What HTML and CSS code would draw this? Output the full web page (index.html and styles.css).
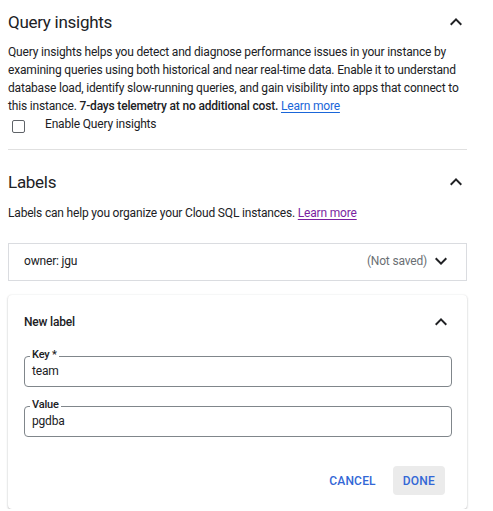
FILE: index.html
```html
<!DOCTYPE html>
<html lang="en">
<head>
<meta charset="utf-8">
<title>Query insights and labels</title>
<link rel="stylesheet" href="styles.css">
</head>
<body>
<div class="panel">
  <div class="section-header first">
    <h2 class="section-title">Query insights</h2>
    <svg class="icon" viewBox="0 0 24 24" width="24" height="24"><path d="M12 8l-6 6 1.41 1.41L12 10.83l4.59 4.58L18 14z"/></svg>
  </div>
  <p class="desc">Query insights helps you detect and diagnose performance issues in your instance by examining queries using both historical and near real-time data. Enable it to understand database load, identify slow-running queries, and gain visibility into apps that connect to this instance. <strong>7-days telemetry at no additional cost.</strong> <a class="link" href="#">Learn more</a></p>
  <label class="check-row"><span class="checkbox"></span><span class="check-text">Enable Query insights</span></label>
  <div class="divider"></div>

  <div class="section-header labels">
    <h2 class="section-title">Labels</h2>
    <svg class="icon" viewBox="0 0 24 24" width="24" height="24"><path d="M12 8l-6 6 1.41 1.41L12 10.83l4.59 4.58L18 14z"/></svg>
  </div>
  <p class="desc single">Labels can help you organize your Cloud SQL instances. <a class="link visited" href="#">Learn more</a></p>

  <div class="label-row">
    <span class="label-name">owner: jgu</span>
    <span class="label-status">(Not saved)</span>
    <svg class="icon" viewBox="0 0 24 24" width="24" height="24"><path d="M16.59 8.59L12 13.17 7.41 8.59 6 10l6 6 6-6z"/></svg>
  </div>

  <div class="card">
    <div class="card-header">
      <span class="card-title">New label</span>
      <svg class="icon" viewBox="0 0 24 24" width="24" height="24"><path d="M12 8l-6 6 1.41 1.41L12 10.83l4.59 4.58L18 14z"/></svg>
    </div>
    <div class="field key">
      <span class="field-label">Key *</span>
      <span class="field-value">team</span>
    </div>
    <div class="field value">
      <span class="field-label">Value</span>
      <span class="field-value">pgdba</span>
    </div>
    <div class="actions">
      <button class="btn">CANCEL</button>
      <button class="btn filled">DONE</button>
    </div>
  </div>
</div>
</body>
</html>
```

FILE: styles.css
```css
* { box-sizing: border-box; }
html, body { margin: 0; padding: 0; background: #fff; }
body {
  font-family: Roboto, "Liberation Sans", Arial, sans-serif;
  color: #202124;
  font-size: 12px;
  letter-spacing: -0.18px;
}
.panel {
  width: 459px;
  margin-left: 8px;
}
.section-header {
  display: flex;
  align-items: center;
  justify-content: space-between;
  height: 24px;
}
.section-header.first { margin-top: 10px; }
.section-header.labels { margin-top: 20px; }
.section-title {
  margin: 0;
  font-size: 17px;
  font-weight: 400;
  line-height: 24px;
  letter-spacing: -0.28px;
}
.icon {
  display: block;
  flex: none;
  fill: #202124;
}
.section-header .icon { margin-right: -1px; }
.desc {
  margin: 9px 0 0;
  font-size: 12px;
  line-height: 18px;
}
.desc strong { font-weight: 500; }
.desc.single { margin-top: 10px; }
.link {
  color: #1a66d9;
  text-decoration: underline;
  text-underline-offset: 2px;
}
.link.visited { color: #7b1fa2; }
.check-row {
  display: flex;
  align-items: flex-start;
  height: 18px;
  line-height: 18px;
}
.checkbox {
  display: block;
  width: 13px;
  height: 13px;
  margin: 5px 0 0 4px;
  border: 1px solid #5f6368;
  border-radius: 2px;
}
.check-text { margin-left: 20px; }
.divider {
  margin-top: 16px;
  height: 1px;
  background: #e0e0e0;
}
.label-row {
  display: flex;
  align-items: center;
  margin-top: 21px;
  height: 38px;
  padding: 0 13px 2px 15px;
  border: 1px solid #dadce0;
}
.label-name { flex: 1; }
.label-status { color: #6b6f74; margin-right: 2px; }
.card {
  margin-top: 14px;
  padding: 15px 15px 14px 16px;
  border-radius: 4px;
  box-shadow: 0 1px 2px 0 rgba(60, 64, 67, 0.3), 0 0 2px 0 rgba(60, 64, 67, 0.1);
}
.card-header {
  display: flex;
  align-items: center;
  justify-content: space-between;
  height: 24px;
}
.card-header .icon { margin-right: -1px; }
.card-title {
  font-size: 12px;
  font-weight: 500;
  line-height: 24px;
}
.field {
  position: relative;
  display: flex;
  align-items: center;
  height: 31px;
  padding: 0 7px;
  border: 1px solid #80868b;
  border-radius: 4px;
}
.field.key { margin-top: 22px; }
.field.value { margin-top: 19px; }
.field-label {
  position: absolute;
  top: -8px;
  left: 5px;
  padding: 0 2px;
  background: #fff;
  font-size: 11px;
  font-weight: 500;
  line-height: 11px;
}
.field-value {
  font-size: 12px;
  line-height: 29px;
}
.actions {
  display: flex;
  justify-content: flex-end;
  gap: 7px;
  margin-top: 29px;
  padding-right: 7px;
}
.btn {
  height: 29px;
  padding: 0 10px;
  border: 0;
  border-radius: 4px;
  background: transparent;
  color: #3367d6;
  font-family: Roboto, "Liberation Sans", Arial, sans-serif;
  font-size: 12px;
  font-weight: 500;
  letter-spacing: 0.2px;
}
.btn.filled { background: #ebebeb; }
```
